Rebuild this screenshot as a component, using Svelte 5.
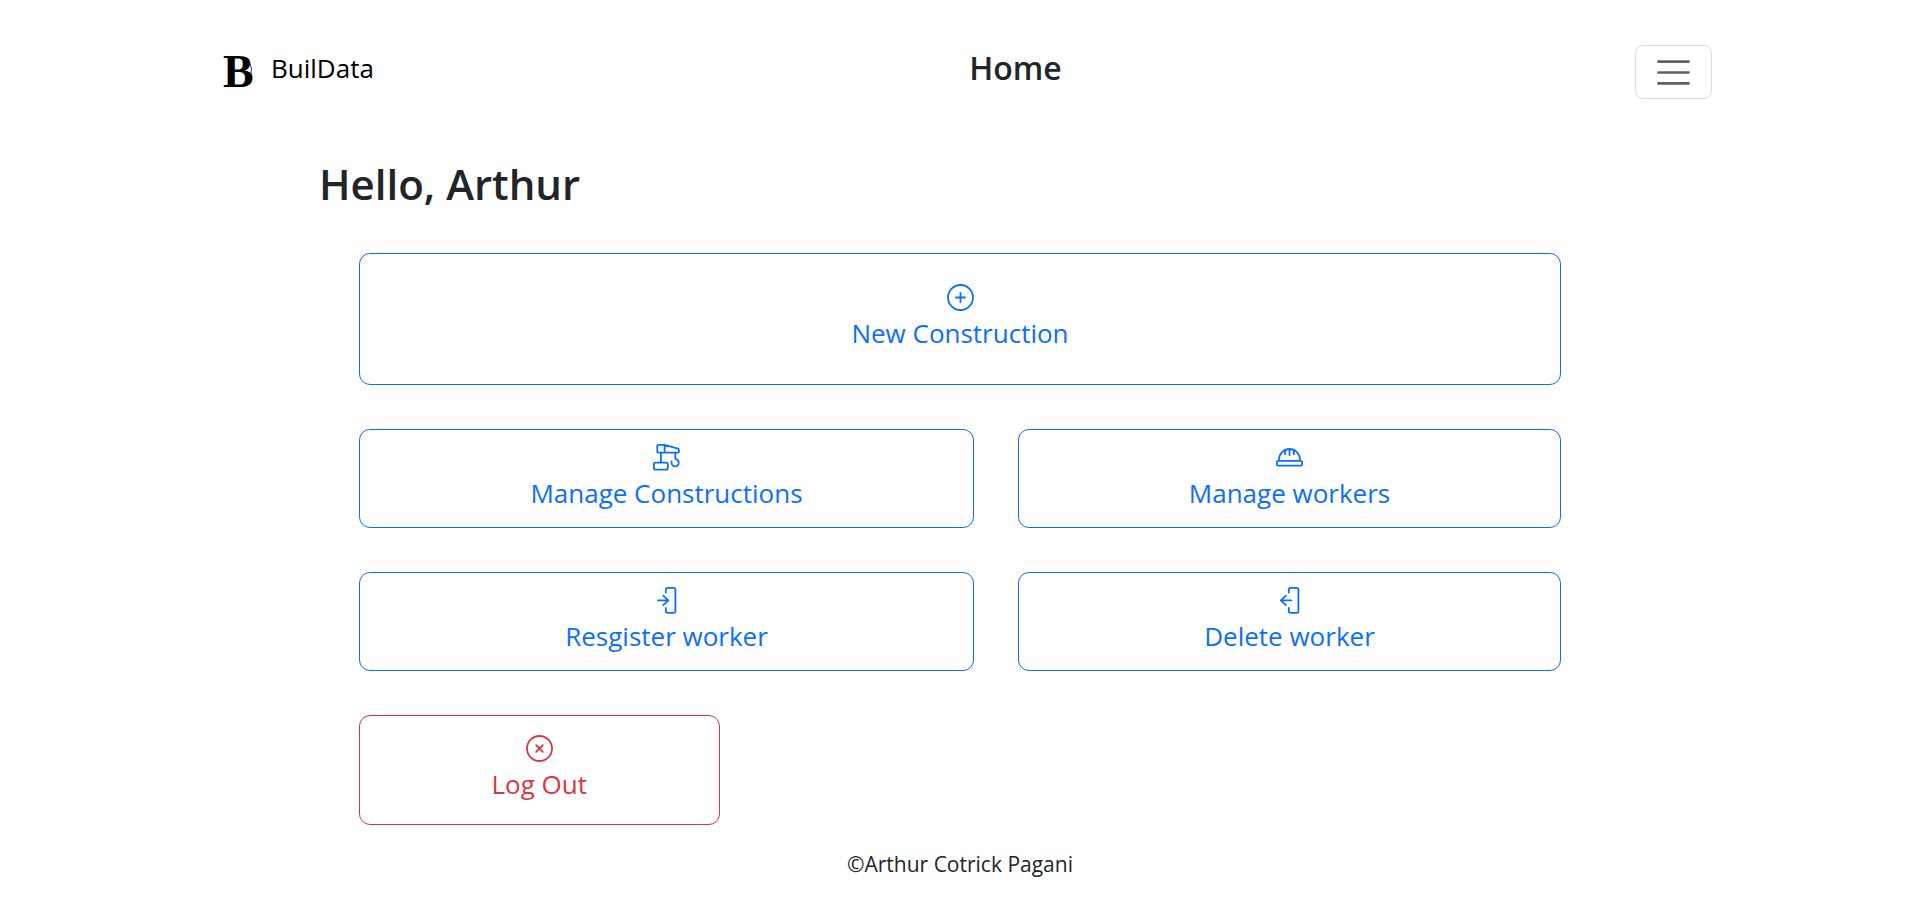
<script>
  const actions = [
    { label: 'New Construction', icon: 'plus', kind: 'wide' },
    { label: 'Manage Constructions', icon: 'crane', kind: '' },
    { label: 'Manage workers', icon: 'helmet', kind: '' },
    { label: 'Resgister worker', icon: 'enter', kind: '' },
    { label: 'Delete worker', icon: 'leave', kind: '' },
    { label: 'Log Out', icon: 'close', kind: 'logout' }
  ];

  const icons = {
    plus: 'M13.5 1a12.5 12.5 0 1 0 0 25a12.5 12.5 0 1 0 0-25zM13.5 9v9M9 13.5h9',
    close: 'M13.5 1a12.5 12.5 0 1 0 0 25a12.5 12.5 0 1 0 0-25zM10.2 10.2l6.6 6.6M16.8 10.2l-6.6 6.6',
    crane:
      'M5.2 .9H11.6L25 4.6q.9.3.9 1.2V7.8q0 .9-.9.9H5.2q-.9 0-.9-.9V1.8q0-.9.9-.9zM11.6 .9V8.7M7.9 8.7V18.6M2.6 18.6H13.1q1.7 0 1.7 1.7V24q0 1.7-1.7 1.7H2.6q-1.7 0-1.7-1.7V20.3q0-1.7 1.7-1.7zM22.3 8.7V14.6q3.5 1.4 3.5 4.2a3.6 3.6 0 0 1-7.2 0V17.4',
    helmet:
      'M3 16.6V15.5a10.4 10.4 0 0 1 21 0V16.6M2.2 16.8H24.8q1.3 0 1.3 1.3V20.3q0 1.4-1.4 1.4H2.3q-1.4 0-1.4-1.4V18.1q0-1.3 1.3-1.3zM13.5 5.2V11M9.2 6.3V10.2M17.8 6.3V10.2',
    enter: 'M12.8 5.6V2.7q0-1.8 1.8-1.8H20.6q1.8 0 1.8 1.8V24q0 1.8-1.8 1.8H14.6q-1.8 0-1.8-1.8V21M4.8 13.4H15.4M10.2 8.6L15.4 13.4L10.2 18.2',
    leave: 'M12.8 5.6V2.7q0-1.8 1.8-1.8H20.6q1.8 0 1.8 1.8V24q0 1.8-1.8 1.8H14.6q-1.8 0-1.8-1.8V21M15.4 13.4H4.8M10 8.6L4.8 13.4L10 18.2'
  };
</script>

<header>
  <a class="brand" href="#home">
    <svg class="logo" width="48" height="54" viewBox="0 0 48 54" aria-hidden="true">
      <text x="15" y="42">B</text>
      <path d="M39 14q8 9 2 21" />
    </svg>
    <span>BuilData</span>
  </a>
  <h2>Home</h2>
  <button class="toggler" type="button" aria-label="Toggle navigation">
    <svg width="41" height="41" viewBox="0 0 30 30" aria-hidden="true">
      <path d="M4 7h22M4 15h22M4 23h22" />
    </svg>
  </button>
</header>

<main>
  <h1>Hello, Arthur</h1>
  <div class="actions">
    {#each actions as action}
      <button class="action {action.kind}" type="button">
        <svg width="27" height="27" viewBox="0 0 27 27" aria-hidden="true">
          <path d={icons[action.icon]} />
        </svg>
        <span>{action.label}</span>
      </button>
    {/each}
  </div>
</main>

<footer>©Arthur Cotrick Pagani</footer>

<style>
  :global(body) {
    margin: 0;
    background: #fff;
    color: #212529;
    font-family: 'Segoe UI', 'Open Sans', 'Noto Sans', sans-serif;
  }
  h1,
  h2 {
    margin: 0;
    font-weight: 600;
  }
  button {
    font-family: inherit;
    background: transparent;
    cursor: pointer;
  }
  svg path {
    fill: none;
    stroke: currentColor;
    stroke-linecap: round;
    stroke-linejoin: round;
  }
  header {
    box-sizing: border-box;
    max-width: 1504px;
    margin: 0 auto;
    padding-top: 45px;
    display: flex;
    align-items: flex-start;
    justify-content: space-between;
  }
  .brand {
    display: flex;
    gap: 15px;
    margin-right: 22px;
    color: #000;
    font-size: 26px;
    line-height: 46px;
    text-decoration: none;
  }
  .logo text {
    font: bold 46px 'Liberation Serif', serif;
  }
  .logo path {
    stroke-width: 0.8;
  }
  h2 {
    font-size: 32px;
    line-height: 46px;
  }
  .toggler {
    display: flex;
    padding: 6px 17px 5px;
    border: 1px solid #d9dadb;
    border-radius: 8px;
    color: #5d6166;
  }
  .toggler path {
    stroke-width: 2;
  }
  main {
    max-width: 1282px;
    margin: 0 auto;
    padding-top: 56px;
  }
  h1 {
    font-size: 42px;
    line-height: 58px;
  }
  .actions {
    display: grid;
    grid-template-columns: 615fr 543fr;
    gap: 44px;
    padding: 40px 40px 0;
  }
  .action {
    display: flex;
    flex-direction: column;
    align-items: center;
    padding: 14px 16px 11px;
    border: 1px solid #0d6efd;
    border-radius: 11px;
    color: #0d6efd;
    font-size: 26px;
    line-height: 45px;
  }
  .action path {
    stroke-width: 1.8;
  }
  .wide {
    grid-column: 1 / -1;
    padding: 30px 16px 28px;
  }
  .logout {
    grid-column: 1 / -1;
    width: 30%;
    padding: 19px 16px 17px;
    border-color: #dc3545;
    color: #dc3545;
  }
  footer {
    padding: 22px 0;
    text-align: center;
    font-size: 21px;
    line-height: 34px;
  }
</style>
